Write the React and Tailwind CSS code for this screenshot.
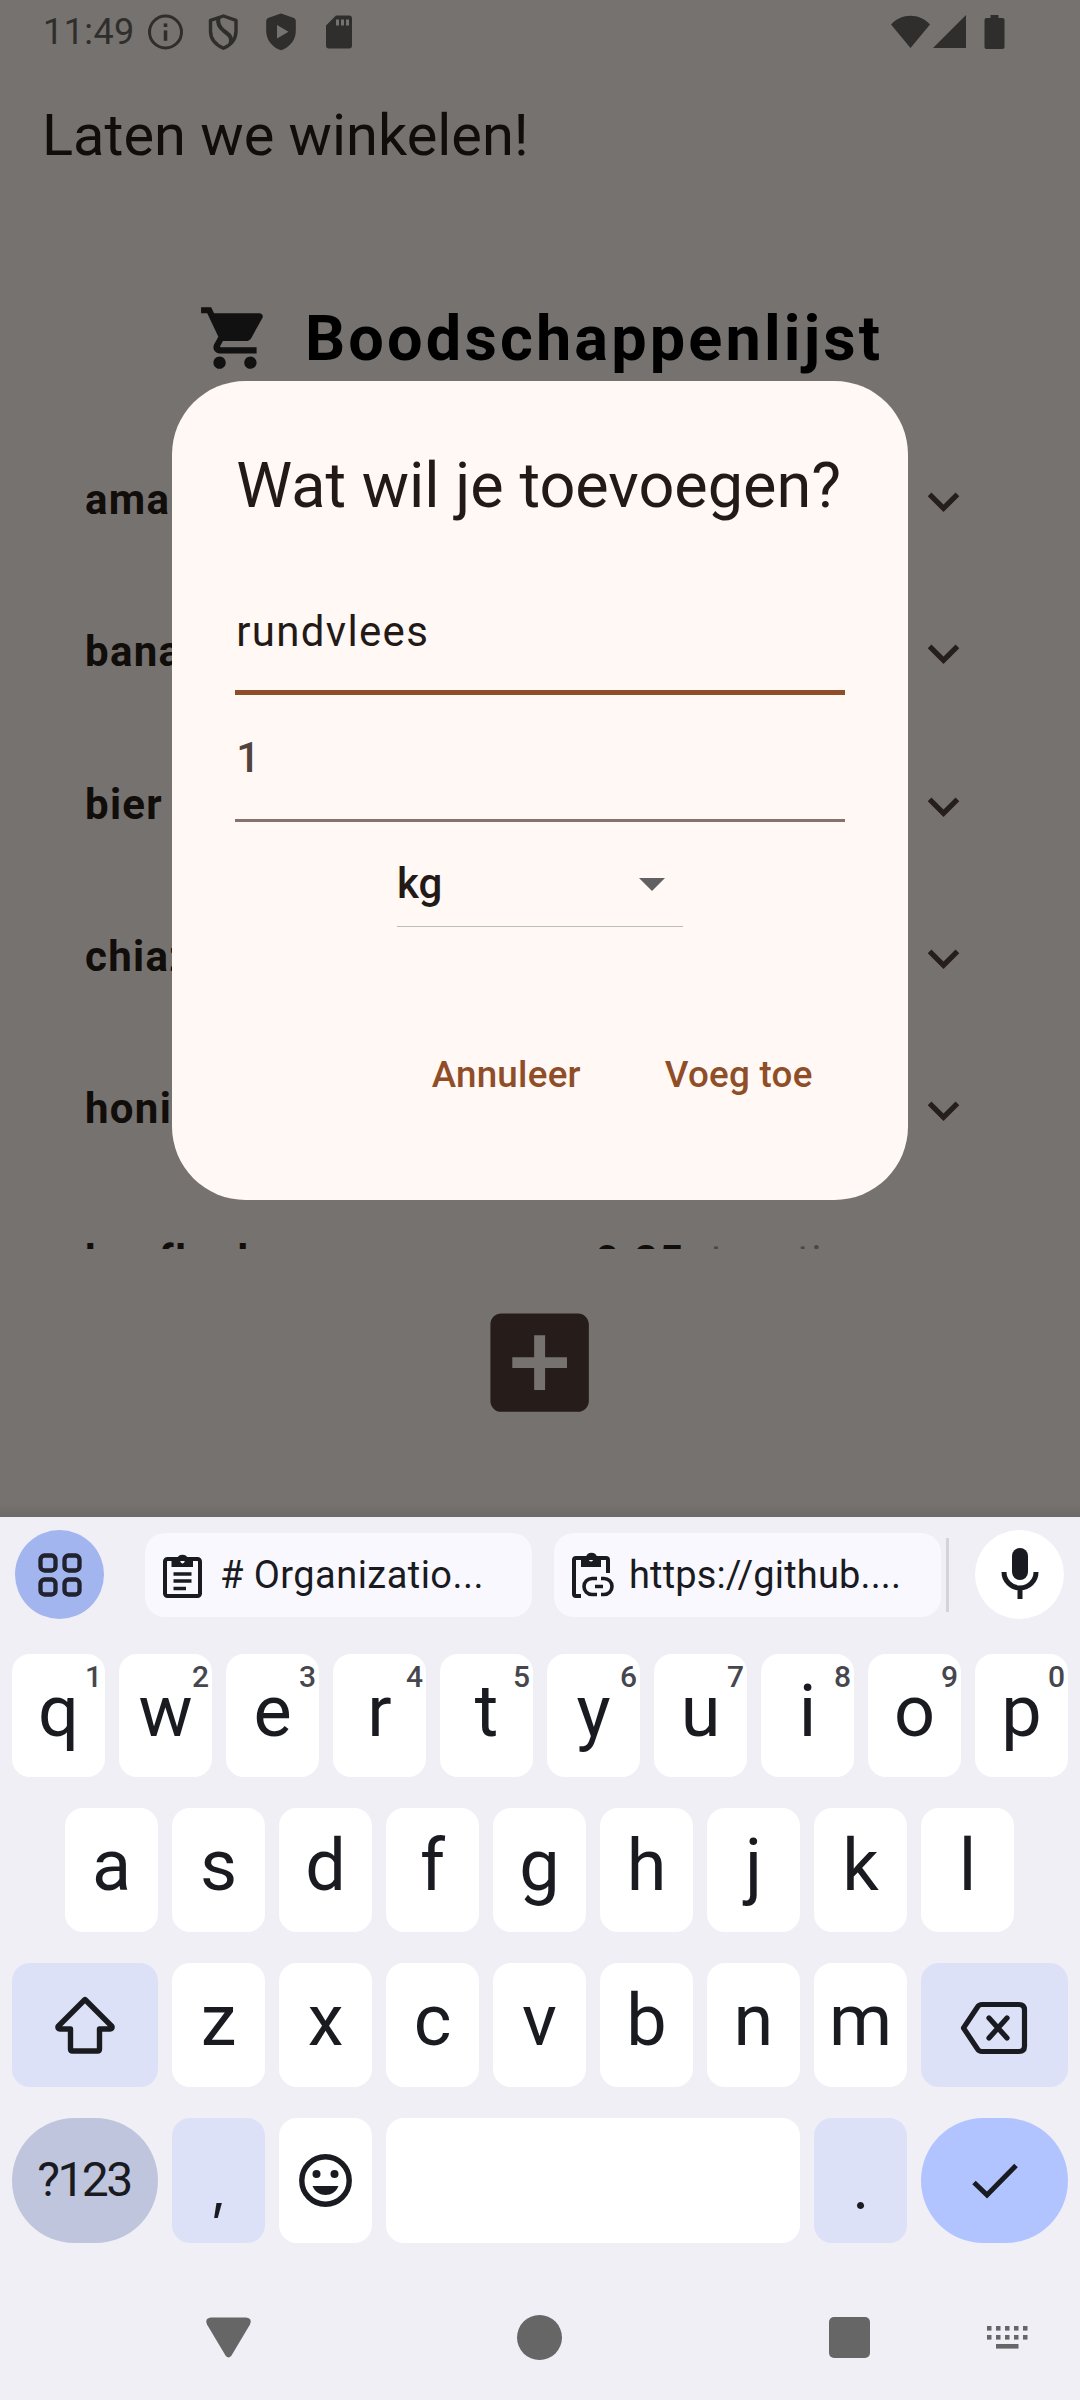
import React from "react";
import { MdShoppingCart, MdExpandMore, MdAddBox } from "react-icons/md";

const ITEMS = [
  { name: "amandelen" },
  { name: "banaan" },
  { name: "bier" },
  { name: "chiazaad" },
  { name: "honing" },
  { name: "knoflook", amount: "0.25", unit: "teentje" },
];

function StatusBar() {
  return (
    <div className="flex h-[63px] shrink-0 items-center pl-[43px] text-[#2f2e2c]">
      <span className="w-[105px] text-[36px] leading-none tracking-[0.4px]">11:49</span>
      <svg className="w-[36px] h-[36px]" viewBox="0 0 36 36" fill="none">
        <circle cx="17.5" cy="18" r="16" stroke="currentColor" strokeWidth="3" />
        <rect x="15.700" y="16.4" width="3.6" height="10.4" fill="currentColor" />
        <rect x="15.700" y="9.4" width="3.6" height="3.6" fill="currentColor" />
      </svg>
      <svg className="ml-[24px] w-[31px] h-[36px]" viewBox="0 0 31 36" fill="none" stroke="currentColor" strokeWidth="3.400">
        <path d="M15.5 2 L28 6.3 V17 C28 25 23 31 15.5 34.3 C8 31 2.5 25 2.5 17 V6.3 Z" strokeLinejoin="round" />
        <path d="M10.5 4 C9 10 11.500 13.500 16 17 C21 20.500 24.500 23 22.500 29.500" strokeWidth="4" />
      </svg>
      <svg className="ml-[26px] w-[32px] h-[38px]" viewBox="0 0 32 38" fill="currentColor">
        <path d="M16 .5 L29 5 Q30.800 5.800 30.800 8 V18 C30.800 27 25 34 16 37.300 C7 34 1.200 27 1.200 18 V8 Q1.200 5.800 3 5 Z M12 12 V25.500 L23.500 18.700 Z" fillRule="evenodd" />
      </svg>
      <svg className="ml-[29px] w-[26px] h-[34px]" viewBox="0 0 26 34">
        <path d="M10 .5 H23 Q26 .5 26 3.500 V30.500 Q26 33.500 23 33.500 H3 Q0 33.500 0 30.500 V10.500 Z M10 4.500 V10.500 H13 V4.500 Z M15 4.500 V10.500 H18 V4.500 Z M20 4.500 V10.500 H23 V4.500 Z" fill="currentColor" fillRule="evenodd" />
      </svg>
      <div className="ml-auto mr-[75px] flex items-center">
        <svg className="w-[39px] h-[34px]" viewBox="0 0 39 34" fill="currentColor">
          <path d="M0 9.500 C10 -2.300 29 -2.300 39 9.500 L19.500 33 Z" />
        </svg>
        <svg className="ml-[3px] w-[33px] h-[34px]" viewBox="0 0 33 34" fill="currentColor">
          <path d="M33 0 V33 H0 Z" />
        </svg>
        <svg className="ml-[18.500px] w-[21px] h-[34px]" viewBox="0 0 21 34" fill="currentColor">
          <path d="M6.500 0 H14.500 V3 H18.500 Q20.500 3 20.500 5 V32 Q20.500 34 18.500 34 H2.500 Q.5 34 .5 32 V5 Q.5 3 2.500 3 H6.500 Z" />
        </svg>
      </div>
    </div>
  );
}

function ListRow({ item }) {
  return (
    <div className="flex h-[152.250px] shrink-0 items-center pl-[85px] pr-[105.500px] text-[42px] leading-none tracking-[1.310px] text-[#110d0a]">
      <span className="w-[510px] pb-1 font-bold">{item.name}</span>
      {item.amount && (
        <span className="flex gap-[25px] pb-1">
          <span className="font-bold">{item.amount}</span>
          <span className="text-[#4a4745]">{item.unit}</span>
        </span>
      )}
      <MdExpandMore className="mb-[1px] ml-auto size-[63px] text-[#261e1b]" />
    </div>
  );
}

function Dialog() {
  return (
    <div className="absolute left-[172.300px] top-[380.600px] flex h-[819px] w-[735.400px] flex-col rounded-[73.500px] bg-[#fff8f5] px-[63px] text-[#231a17]">
      <h2 className="mt-[68px] h-[74px] whitespace-nowrap pl-[1px] text-[63px] leading-[74px]">Wat wil je toevoegen?</h2>
      <div className="mt-[60px] flex h-[112px] flex-col border-b-[5px] border-[#8f4e28] pl-[1px] pt-[24px] text-[42px] leading-[50px] tracking-[1.310px]">rundvlees</div>
      <div className="flex h-[127px] flex-col border-b-[3px] border-[#85736b] pl-[1px] pt-[38px] text-[42px] font-medium leading-[50px] text-[#52443c]">1</div>
      <div className="mx-auto flex h-[105px] w-[286px] items-center border-b border-[#bdbdbd] pr-[18px] pt-[21px] text-[42px] font-medium leading-[50px]">
        <span>kg</span>
        <svg className="ml-auto h-[13px] w-[26px]" viewBox="0 0 26 13">
          <path d="M0 0H26L13 13Z" fill="#616161" />
        </svg>
      </div>
      <div className="mt-[123px] flex justify-end gap-[84px] pr-[32px] text-[36.750px] font-medium leading-[50px] text-[#8f4e28]">
        <button className="tracking-[0.260px]">Annuleer</button>
        <button className="tracking-[0.260px]">Voeg toe</button>
      </div>
    </div>
  );
}

function Suggestion({ icon, text, className }) {
  return (
    <div className={"flex h-[84px] w-[387px] items-center rounded-[20px] bg-[#f9f8ff] pl-[16px] " + className}>
      <span className="w-[59px]">{icon}</span>
      <span className="whitespace-nowrap pt-[1px] text-[38px] font-[450]">{text}</span>
    </div>
  );
}

function ClipboardIcon() {
  return (
    <svg className="h-[50px] w-[44px]" viewBox="0 0 44 50" fill="none" stroke="currentColor" strokeWidth="4">
      <rect x="4" y="9" width="35" height="37" rx="2.500" />
      <path d="M10.500 9 H16 A5.700 5.700 0 0 1 27 9 H32 V17 H10.500 Z M21.500 8 a2.300 2.700 0 1 0 .01 0 Z" fill="currentColor" fillRule="evenodd" stroke="none" />
      <path d="M12.500 24 H30.500 M12.500 31 H30.500 M12.500 38.500 H25" strokeWidth="3.500" />
    </svg>
  );
}

function ClipboardLinkIcon() {
  return (
    <svg className="h-[50px] w-[46px]" viewBox="0 0 46 50" fill="none" stroke="currentColor" strokeWidth="4">
      <path d="M11 46 H6 Q4 46 4 44 V10 Q4 8 6 8 H36 Q38 8 38 10 V23" />
      <path d="M11 7 H16 A5.700 5.700 0 0 1 27 7 H31 V17 H11 Z M21 6.500 a2.300 2.500 0 1 0 .01 0 Z" fill="currentColor" fillRule="evenodd" stroke="none" />
      <path d="M27 28.500 H22 A8 8 0 0 0 22 44.500 H27 M31 28.500 H34 A8 8 0 0 1 34 44.500 H31 M25 36.500 H33" strokeWidth="3.600" />
    </svg>
  );
}

function SuggestionBar() {
  return (
    <div className="flex h-[89px] items-center pl-[15px] pr-[16px]">
      <div className="flex size-[89px] items-center justify-center rounded-full bg-[#a3b5ef]">
        <svg className="size-[44px]" viewBox="0 0 44 44" fill="none" stroke="#20222e" strokeWidth="4.300">
          <rect x="2.500" y="2.500" width="15" height="15" rx="4" />
          <rect x="26.500" y="2.500" width="15" height="15" rx="4" />
          <rect x="2.500" y="26.500" width="15" height="15" rx="4" />
          <rect x="26.500" y="26.500" width="15" height="15" rx="4" />
        </svg>
      </div>
      <Suggestion className="ml-[41px] tracking-[0.450px]" icon={<ClipboardIcon />} text="# Organizatio..." />
      <Suggestion className="ml-[22px] tracking-[0.150px]" icon={<ClipboardLinkIcon />} text="https://github...." />
      <div className="ml-[5px] h-[74px] w-[3px] bg-[#d3d3da]" />
      <div className="ml-auto flex size-[89px] items-center justify-center rounded-full bg-white">
        <svg className="mb-[2px] h-[52px] w-[38px]" viewBox="0 0 38 52" fill="none" stroke="currentColor" strokeWidth="5">
          <rect x="11" y="0" width="16" height="32" rx="8" fill="currentColor" stroke="none" />
          <path d="M3 24 A16 16 0 0 0 35 24 M19 40 V51" />
        </svg>
      </div>
    </div>
  );
}

function Key({ label, hint }) {
  return (
    <div className="relative flex h-full w-[93px] items-center justify-center rounded-[18px] bg-white pb-[8px] text-[72px] leading-none">
      {label}
      {hint && <span className="absolute right-[3px] top-[8px] text-[30px] font-medium leading-[29px] text-[#46474e]">{hint}</span>}
    </div>
  );
}

function Keyboard() {
  return (
    <div className="flex h-[883px] shrink-0 flex-col bg-[#f0eff6] pt-[13px] text-[#1a1b21]">
      <SuggestionBar />
      <div className="mt-[35px] flex h-[123px] gap-[14px] px-[12px]">
        {"qwertyuiop".split("").map((k, i) => (
          <Key key={k} label={k} hint={String((i + 1) % 10)} />
        ))}
      </div>
      <div className="mt-[31px] flex h-[124px] gap-[14px] pl-[65px]">
        {"asdfghjkl".split("").map((k) => (
          <Key key={k} label={k} />
        ))}
      </div>
      <div className="mt-[31px] flex h-[124px] gap-[14px] px-[12px]">
        <div className="flex w-[146px] items-center justify-center rounded-[18px] bg-[#dde1f8]">
          <svg className="h-[60px] w-[60px]" viewBox="0 0 60 60" fill="none" stroke="currentColor" strokeWidth="5.400" strokeLinejoin="round">
            <path d="M30 4.500 L57 31.500 Q57.500 34 55 34 H44.500 V54 Q44.500 56 42.500 56 H17.500 Q15.500 56 15.500 54 V34 H5 Q2.500 34 3 31.500 Z" />
          </svg>
        </div>
        {"zxcvbnm".split("").map((k) => (
          <Key key={k} label={k} />
        ))}
        <div className="flex w-[147px] items-center justify-center rounded-[18px] bg-[#dde1f8]">
          <svg className="mr-[2px] mt-[5px] h-[54px] w-[68px]" viewBox="0 0 68 54" fill="none" stroke="currentColor" strokeWidth="5.200" strokeLinejoin="round" strokeLinecap="round">
            <path d="M22 3.500 H59 Q64.500 3.500 64.500 9 V45 Q64.500 50.500 59 50.500 H22 Q19 50.500 17.500 48 L3.500 27 L17.500 6 Q19 3.500 22 3.500 Z" />
            <path d="M29 17 L47 37 M47 17 L29 37" />
          </svg>
        </div>
      </div>
      <div className="mt-[31px] flex h-[125px] gap-[14px] px-[12px]">
        <div className="flex w-[146px] items-center justify-center rounded-full bg-[#c0c5de] pb-[2px] pr-[2px] text-[48px] font-[450] leading-none tracking-[-2.500px]">?123</div>
        <div className="flex w-[93px] items-end justify-center rounded-[18px] bg-[#dde1f8] pb-[26px] font-[Inter] text-[54px] leading-[54px]">,</div>
        <div className="flex w-[93px] items-center justify-center rounded-[18px] bg-white">
          <svg className="size-[53px]" viewBox="0 0 53 53">
            <circle cx="26.500" cy="26.500" r="23.700" fill="none" stroke="currentColor" strokeWidth="5.400" />
            <circle cx="17.500" cy="20" r="4" fill="currentColor" />
            <circle cx="35.500" cy="20" r="4" fill="currentColor" />
            <path d="M13.500 32 H39.500 C35 44 18 44 13.500 32 Z" fill="currentColor" />
          </svg>
        </div>
        <div className="w-[414px] rounded-[18px] bg-white" />
        <div className="flex w-[93px] items-end justify-center rounded-[18px] bg-[#dde1f8] pb-[26px] font-[Inter] text-[54px] leading-[54px]">.</div>
        <div className="flex w-[147px] items-center justify-center rounded-full bg-[#b1c4ff]">
          <svg className="h-[36px] w-[46px]" viewBox="0 0 46 36" fill="none" stroke="currentColor" strokeWidth="5">
            <path d="M2 19.500 L15 32 L44 2.500" />
          </svg>
        </div>
      </div>
      <div className="mt-[72px] flex h-[45px] items-center pl-[206px] pr-[52px] text-[#666666]">
        <svg className="h-[41px] w-[45px]" viewBox="0 0 45 41" fill="currentColor">
          <path d="M5 .5 H40 Q46.500 1 44 7.500 L25.500 38.500 Q22.500 42.500 19.500 38.500 L1 7.500 Q-1.500 1 5 .5 Z" />
        </svg>
        <div className="ml-[266px] size-[45px] rounded-full bg-[#666666]" />
        <div className="ml-[267px] size-[41px] rounded-[5px] bg-[#666666]" />
        <svg className="ml-auto h-[23px] w-[41px]" viewBox="0 0 41 23" fill="currentColor">
          {[0, 9, 18, 27, 36].map((x) => (
            <React.Fragment key={x}>
              <rect x={x} y="0" width="4.500" height="4.600" />
              <rect x={x} y="9" width="4.500" height="4.600" />
            </React.Fragment>
          ))}
          <rect x="9" y="18" width="22.500" height="4.600" />
        </svg>
      </div>
    </div>
  );
}

export default function App() {
  return (
    <div className="relative flex h-[2400px] w-[1080px] flex-col overflow-hidden bg-[#76726f] font-[Roboto,sans-serif]">
      <div className="relative flex h-[1517px] shrink-0 flex-col">
        <StatusBar />
        <h1 className="mt-[35px] h-[74px] pl-[42px] text-[57.750px] leading-[74px] text-[#110d0a]">Laten we winkelen!</h1>
        <div className="mt-[129px] flex h-[74px] items-center pl-[198px] text-black">
          <MdShoppingCart className="size-[74px] text-[#111111]" />
          <span className="ml-[33px] text-[63px] font-bold leading-none tracking-[3.150px]">Boodschappenlijst</span>
        </div>
        <div className="mt-[51px] flex h-[823px] flex-col overflow-hidden">
          {ITEMS.map((item) => (
            <ListRow key={item.name} item={item} />
          ))}
        </div>
        <MdAddBox className="mx-auto mt-[48px] size-[131.250px] text-[#261d1b]" />
        <div className="mt-auto h-[14px] bg-linear-to-b from-transparent to-black/8" />
        <Dialog />
      </div>
      <Keyboard />
    </div>
  );
}
